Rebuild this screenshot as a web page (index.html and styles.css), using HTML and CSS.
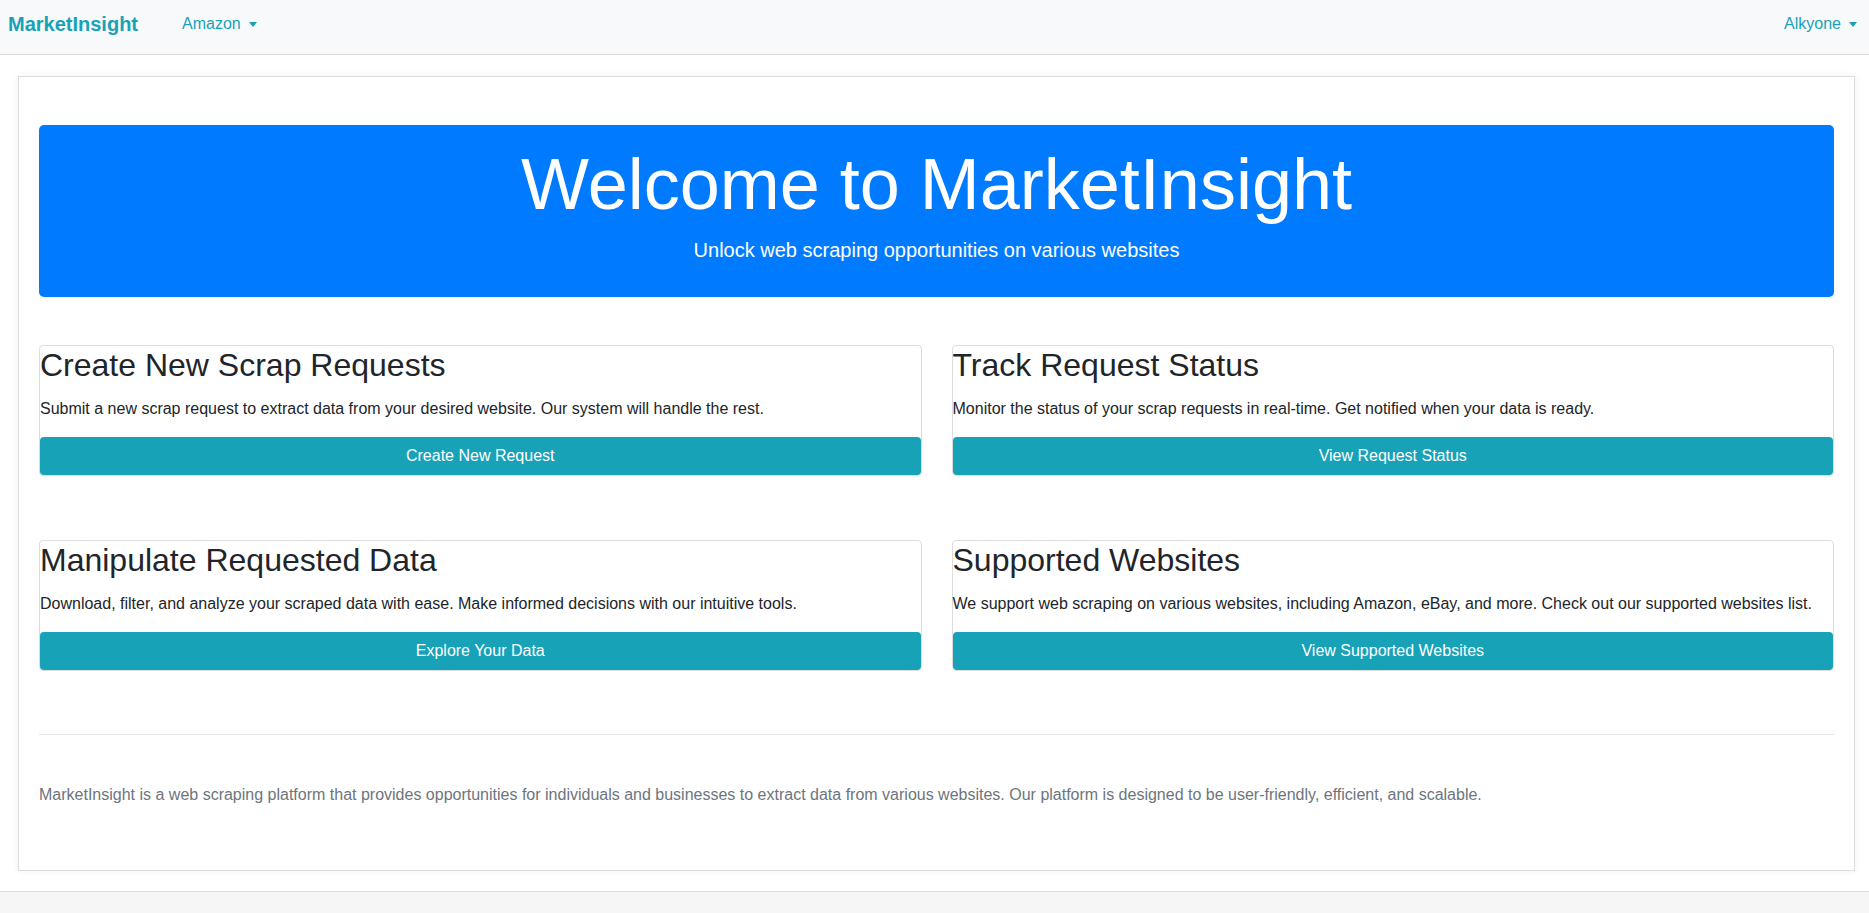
FILE: index.html
```html
<!DOCTYPE html>
<html lang="en">
<head>
<meta charset="utf-8">
<title>MarketInsight</title>
<link rel="stylesheet" href="styles.css">
</head>
<body>
<nav class="navbar">
  <a class="brand" href="#">MarketInsight</a>
  <a class="nav-link dropdown" href="#">Amazon<span class="caret"></span></a>
  <a class="nav-link dropdown user" href="#">Alkyone<span class="caret"></span></a>
</nav>
<main class="page">
  <section class="panel">
    <div class="hero">
      <h1 class="hero-title">Welcome to MarketInsight</h1>
      <p class="hero-lead">Unlock web scraping opportunities on various websites</p>
    </div>
    <div class="features">
      <div class="feature">
        <h2 class="feature-title">Create New Scrap Requests</h2>
        <p class="feature-text">Submit a new scrap request to extract data from your desired website. Our system will handle the rest.</p>
        <a class="btn" href="#">Create New Request</a>
      </div>
      <div class="feature">
        <h2 class="feature-title">Track Request Status</h2>
        <p class="feature-text">Monitor the status of your scrap requests in real-time. Get notified when your data is ready.</p>
        <a class="btn" href="#">View Request Status</a>
      </div>
      <div class="feature">
        <h2 class="feature-title">Manipulate Requested Data</h2>
        <p class="feature-text">Download, filter, and analyze your scraped data with ease. Make informed decisions with our intuitive tools.</p>
        <a class="btn" href="#">Explore Your Data</a>
      </div>
      <div class="feature">
        <h2 class="feature-title">Supported Websites</h2>
        <p class="feature-text">We support web scraping on various websites, including Amazon, eBay, and more. Check out our supported websites list.</p>
        <a class="btn" href="#">View Supported Websites</a>
      </div>
    </div>
    <hr class="divider">
    <p class="about">MarketInsight is a web scraping platform that provides opportunities for individuals and businesses to extract data from various websites. Our platform is designed to be user-friendly, efficient, and scalable.</p>
  </section>
</main>
</body>
</html>
```
FILE: styles.css
```css
* { box-sizing: border-box; }

html, body {
  margin: 0;
  padding: 0;
}

body {
  background: #f6f6f6;
  font-family: "Liberation Sans", Arial, sans-serif;
  font-size: 16px;
  line-height: 1.5;
  color: #212529;
}

a { text-decoration: none; }

.navbar {
  display: flex;
  align-items: center;
  height: 55px;
  padding: 0 12px 6px 8px;
  background: #f8f9fa;
  border-bottom: 1px solid #dcdcdc;
}

.brand {
  font-size: 20px;
  font-weight: bold;
  line-height: 30px;
  color: #17a2b8;
}

.nav-link {
  color: #17a2b8;
  font-size: 16px;
  line-height: 24px;
  display: inline-flex;
  align-items: center;
}

.dropdown { margin-left: 44px; }

.user { margin-left: auto; }

.caret {
  display: inline-block;
  width: 0;
  height: 0;
  margin-left: 8px;
  border-top: 5px solid #17a2b8;
  border-left: 4px solid transparent;
  border-right: 4px solid transparent;
}

.page {
  background: #fff;
  padding: 21px 14px 20px 18px;
  border-bottom: 1px solid #dedede;
  box-shadow: 0 2px 6px rgba(0,0,0,0.04);
}

.panel {
  border: 1px solid #dcdcdc;
  padding: 48px 20px 47px;
  background: #fff;
  box-shadow: 0 0 8px rgba(0,0,0,0.06);
}

.hero {
  background: #007bff;
  color: #fff;
  border-radius: 5px;
  padding: 16px;
  text-align: center;
}

.hero-title {
  margin: 0 0 8px;
  font-size: 72px;
  font-weight: 300;
  line-height: 86px;
}

.hero-lead {
  margin: 0 0 16px;
  font-size: 20px;
  line-height: 30px;
}

.features {
  display: grid;
  grid-template-columns: 1fr 1fr;
  column-gap: 30px;
  row-gap: 64px;
  margin-top: 48px;
}

.feature {
  border: 1px solid #dcdcdc;
  border-radius: 4px;
}

.feature-title {
  margin: 0 0 13px;
  font-size: 32px;
  font-weight: 500;
  line-height: 38px;
}

.feature-text {
  margin: 0 0 16px;
  font-size: 16px;
  line-height: 24px;
}

.btn {
  display: block;
  height: 38px;
  line-height: 24px;
  padding: 7px 12px;
  background: #17a2b8;
  color: #fff;
  text-align: center;
  border-radius: 4px;
  font-size: 16px;
}

.divider {
  margin: 63px 0 48px;
  border: 0;
  border-top: 1px solid rgba(0,0,0,0.1);
}

.about {
  margin: 0 0 16px;
  color: #6c757d;
  font-size: 16px;
  line-height: 24px;
}
```
